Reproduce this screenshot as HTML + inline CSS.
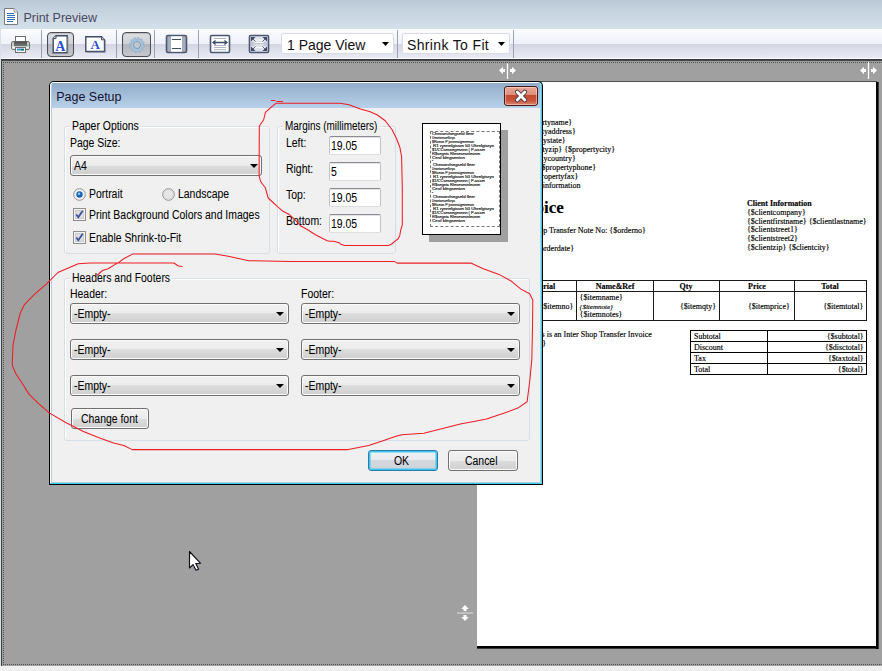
<!DOCTYPE html>
<html><head><meta charset="utf-8">
<style>
*{margin:0;padding:0;box-sizing:border-box}
html,body{width:882px;height:671px;overflow:hidden;background:#f0f0f0;font-family:"Liberation Sans",sans-serif;position:relative}
.a{position:absolute}
#title{left:0;top:0;width:882px;height:29px;background:linear-gradient(#bccad8,#d4e1eb)}
#title .t{left:23px;top:8px;font-size:12.5px;color:#4a4860;white-space:nowrap}
#tb{left:1px;top:29px;width:881px;height:30px;background:linear-gradient(#fbfcff 0,#f0f1f9 15px,#d3d6e2 15px,#e9eaf5 29px,#fff 29px)}
.sep{width:1px;height:28px;top:30px;background:#9aa2b0}
.btnp{border:1px solid #4c4e54;border-radius:4px;background:linear-gradient(#dedfe3 0,#cfd0d5 11px,#b4b6bd 11px,#c6c8ce 100%);box-shadow:inset 0 1px 1px rgba(0,0,0,.15)}
.dd{background:#fff;border:1px solid #d9dce4;border-radius:2px;font-size:14px;color:#111;white-space:nowrap}
.dd .arr{position:absolute;width:0;height:0;border-left:3.5px solid transparent;border-right:3.5px solid transparent;border-top:4px solid #000}
#gray{left:1px;top:59px;width:881px;height:607px;background:#a0a0a0;border-top:1px solid #343c4c;}
#gray2{left:1px;top:60px;width:881px;height:606px;border-top:1px solid #454545;border-left:1px solid #3d3d3d}
.dotx{height:1px;background:repeating-linear-gradient(90deg,#505050 0 1px,transparent 1px 2px)}
.doty{width:1px;background:repeating-linear-gradient(180deg,#505050 0 1px,transparent 1px 2px)}
#bot{left:0;top:666px;width:882px;height:5px;background:#f0f0f0}
#page{left:477px;top:82px;width:399px;height:564px;background:#fff}
.serif{font-family:"Liberation Serif",serif;color:#000;white-space:nowrap;-webkit-text-stroke:0.15px #000}
#dlg{left:49px;top:81px;width:494px;height:404px;border:1px solid #1a1a1a;border-radius:6px 6px 0 0;background:#f0f0f0;overflow:hidden}
.lbl{font-size:12px;color:#000;white-space:nowrap;letter-spacing:0;transform:scaleX(0.87);transform-origin:0 0;-webkit-text-stroke:0.05px #000}
.grp{border:1px solid #d5dfe5;border-radius:3px;box-shadow:inset 1px 1px 0 #fff}
.leg{background:#f0f0f0;padding:0 2px}
.combo{height:21px;border:1px solid #707070;border-radius:3px;background:linear-gradient(#f2f2f2 0,#ebebeb 50%,#dddddd 50%,#cfcfcf 100%);box-shadow:inset 0 0 0 1px #fbfbfb}
.combo .arr{position:absolute;width:0;height:0;border-left:4px solid transparent;border-right:4px solid transparent;border-top:4px solid #000;top:8px}
.combo .lbl{position:absolute;left:3px;top:3px}
.tbox{width:52px;height:19px;background:#fff;border:1px solid #c2c4ca;border-top-color:#8a8c92;border-bottom-color:#dcdee2;border-radius:2px;box-shadow:inset 0 1px 0 #e4e4e6}
.tbox .lbl{position:absolute;left:2px;top:3px;font-size:12px}
.btn{border:1px solid #707070;border-radius:3px;background:linear-gradient(#f2f2f2 0,#ebebeb 50%,#dddddd 50%,#cfcfcf 100%);box-shadow:inset 0 0 0 1px #fbfbfb;text-align:center}
</style></head><body>
<!-- title bar -->
<div id="title" class="a">
  <svg class="a" style="left:4px;top:8px" width="14" height="17" viewBox="0 0 14 17">
    <path d="M0.5 0.5H10L13.5 4V16.5H0.5Z" fill="#fff" stroke="#7a7a7a"/>
    <path d="M10 0.5V4H13.5" fill="#e8e8e8" stroke="#9a9a9a"/>
    <g stroke="#2f6fc0" stroke-width="1"><path d="M3 5.5H10M3 7.5H11M3 9.5H11M3 11.5H11M3 13.5H9"/></g>
  </svg>
  <div class="a t" style="top:11.9px;left:23.4px;line-height:12.5px">Print Preview</div>
</div>
<!-- toolbar -->
<div id="tb" class="a"></div>
<!-- toolbar items -->
<svg class="a" style="left:10px;top:35px" width="21" height="19" viewBox="0 0 21 19">
 <defs><linearGradient id="pg" x1="0" y1="0" x2="0" y2="1"><stop offset="0" stop-color="#4e4e4e"/><stop offset="1" stop-color="#7a7a7a"/></linearGradient></defs>
 <rect x="5.5" y="1.5" width="10" height="6" fill="#fff" stroke="#6e6e6e"/>
 <rect x="1.5" y="6.5" width="18" height="8" rx="1.5" fill="#c8c8c8" stroke="#707070"/>
 <rect x="4" y="6.5" width="13" height="5" fill="url(#pg)"/>
 <rect x="2" y="11.5" width="17" height="2" fill="#f4f4f4"/>
 <rect x="5.5" y="12.5" width="10" height="5" fill="#fff" stroke="#6e6e6e"/>
 <rect x="7" y="13.5" width="7" height="2" fill="#3a8ee0"/>
 <rect x="11" y="14" width="3" height="1.5" fill="#208040"/>
 <rect x="17" y="10" width="1.5" height="1.5" fill="#50e050"/>
</svg>
<div class="a sep" style="left:41px"></div>
<div class="a btnp" style="left:47px;top:32px;width:27px;height:25px"></div>
<svg class="a" style="left:52px;top:35px" width="17" height="19" viewBox="0 0 17 19">
 <path d="M4 0.8H15.2V17.7H1.2V3.6Z" fill="#fff" stroke="#3e4a66" stroke-width="1.4"/>
 <path d="M1.2 3.6H4V0.8" fill="#e4e4e4" stroke="#3e4a66" stroke-width="1"/>
 <path d="M15.9 2V18.4H2.5" fill="none" stroke="#8a8e98" stroke-width="0.8"/>
 <text x="8.4" y="15.6" font-family="Liberation Serif" font-weight="bold" font-size="14" fill="#2a52d0" text-anchor="middle">A</text>
</svg>
<svg class="a" style="left:85px;top:36px" width="22" height="17" viewBox="0 0 22 17">
 <path d="M0.8 0.8H16.5L19.5 3.8V15.5H0.8Z" fill="#fff" stroke="#3e4a66" stroke-width="1.4"/>
 <path d="M16.5 0.8V3.8H19.5" fill="#e4e4e4" stroke="#3e4a66" stroke-width="1"/>
 <path d="M20.3 4V16.3H2" fill="none" stroke="#8a8e98" stroke-width="0.8"/>
 <text x="10.2" y="13" font-family="Liberation Serif" font-weight="bold" font-size="13" fill="#2a52d0" text-anchor="middle">A</text>
</svg>
<div class="a sep" style="left:116px"></div>
<div class="a btnp" style="left:122px;top:32px;width:29px;height:25px"></div>
<svg class="a" style="left:128px;top:35.6px" width="18" height="18" viewBox="0 0 18 18">
 <path d="M15.00,9.00 L16.57,9.72 L16.34,10.97 L14.62,11.09 L14.20,12.00 L15.19,13.40 L14.37,14.37 L12.82,13.62 L12.00,14.20 L12.16,15.91 L10.97,16.34 L10.00,14.92 L9.00,15.00 L8.28,16.57 L7.03,16.34 L6.91,14.62 L6.00,14.20 L4.60,15.19 L3.63,14.37 L4.38,12.82 L3.80,12.00 L2.09,12.16 L1.66,10.97 L3.08,10.00 L3.00,9.00 L1.43,8.28 L1.66,7.03 L3.38,6.91 L3.80,6.00 L2.81,4.60 L3.63,3.63 L5.18,4.38 L6.00,3.80 L5.84,2.09 L7.03,1.66 L8.00,3.08 L9.00,3.00 L9.72,1.43 L10.97,1.66 L11.09,3.38 L12.00,3.80 L13.40,2.81 L14.37,3.63 L13.62,5.18 L14.20,6.00 L15.91,5.84 L16.34,7.03 L14.92,8.00Z" fill="#a9c5dc" stroke="#8aaac6" stroke-width="0.7"/>
 <circle cx="9" cy="9" r="3.6" fill="#c4c6cc" stroke="#7c9ebc" stroke-width="1"/>
</svg>
<div class="a sep" style="left:154px"></div>
<svg class="a" style="left:165px;top:34px" width="23" height="20" viewBox="0 0 23 20">
 <rect x="1.5" y="1.5" width="20" height="17" rx="1.5" fill="#a9aebb" stroke="#4a5672" stroke-width="1.6"/>
 <rect x="6" y="2.3" width="11" height="15.4" fill="#fff"/>
 <path d="M7 5.5H16M7 14.5H16" stroke="#3e4a66" stroke-width="1.2"/>
</svg>
<div class="a sep" style="left:198px"></div>
<svg class="a" style="left:209px;top:34px" width="22" height="20" viewBox="0 0 22 20">
 <rect x="1.5" y="1.5" width="19" height="17" rx="1.2" fill="#fff" stroke="#4a5672" stroke-width="1.6"/>
 <path d="M5 4.5H17M5 11.5H17M5 13.5H17M5 15.7H17" stroke="#a4aab6" stroke-width="0.9"/>
 <path d="M4.5 8.5H17.5" stroke="#3e4a66" stroke-width="1.5"/>
 <path d="M3 8.5L6.5 5.8V11.2Z M19 8.5L15.5 5.8V11.2Z" fill="#3e4a66"/>
</svg>
<svg class="a" style="left:248px;top:34px" width="22" height="20" viewBox="0 0 22 20">
 <rect x="1.5" y="1.5" width="19" height="17" rx="1.2" fill="#dfe2ea" stroke="#4a5672" stroke-width="1.6"/>
 <rect x="3" y="8" width="16" height="4" fill="#c2c8d4"/>
 <path d="M6.5 6H15.5M6.5 8.5H15.5M6.5 11H15.5M6.5 13.5H15.5" stroke="#fbfbfd" stroke-width="1"/>
 <path d="M4 4L7.5 7.5M18 4L14.5 7.5M4 16L7.5 12.5M18 16L14.5 12.5" stroke="#5a6680" stroke-width="1"/>
 <path d="M3 3H7.5L3 7.5Z M19 3H14.5L19 7.5Z M3 17H7.5L3 12.5Z M19 17H14.5L19 12.5Z" fill="#3e4a66"/>
</svg>
<div class="a dd" style="left:281px;top:33px;width:113px;height:21px"></div><svg class="a" style="left:381px;top:41px" width="9" height="6"><path d="M1 1H8L4.5 5Z" fill="#000"/></svg>
<div class="a" style="left:287px;top:37.5px;font-size:14px;line-height:14px;color:#111;white-space:nowrap">1 Page View</div>
<div class="a sep" style="left:397px"></div>
<div class="a dd" style="left:402px;top:33px;width:108px;height:21px"></div><svg class="a" style="left:497px;top:41px" width="9" height="6"><path d="M1 1H8L4.5 5Z" fill="#000"/></svg>
<div class="a" style="left:407px;top:37.5px;font-size:14px;line-height:14px;color:#111;white-space:nowrap;letter-spacing:0.35px">Shrink To Fit</div>
<div class="a sep" style="left:513px"></div>
<div id="gray" class="a"></div>
<div id="gray2" class="a"></div>
<div class="a dotx" style="left:3px;top:62px;width:879px"></div>
<div class="a doty" style="left:3px;top:62px;height:603px"></div>
<div class="a dotx" style="left:3px;top:664px;width:879px"></div>
<div id="bot" class="a"></div>
<div class="a" style="left:0;top:29px;width:1px;height:637px;background:#d8e0ea"></div>
<!-- page -->
<div id="page" class="a"></div>
<div class="a" style="left:477px;top:81px;width:400px;height:1px;background:#505050"></div>
<div class="a" style="left:477px;top:646px;width:402px;height:3px;background:#000;border-bottom:1px solid #3a3a3a;border-right:1px solid #3a3a3a"></div>
<div class="a" style="left:876px;top:82px;width:3px;height:567px;background:#000;border-right:1px solid #3a3a3a"></div>
<!-- cursor -->
<svg class="a" style="left:187px;top:549px" width="16" height="24" viewBox="0 0 16 24"><path d="M2.5,2.5 L2.5,19 L6,15.6 L9,21.3 L11.6,20.2 L8.8,14.6 L13.6,14.3 Z" fill="#fff" stroke="#0d0d1a" stroke-width="1.1" stroke-linejoin="round"/></svg>
<!-- page content -->
<div class="a serif" style="top:118.6px;font-size:8px;line-height:8px;right:309.8px;">{$propertyname}</div>
<div class="a serif" style="top:127.6px;font-size:8px;line-height:8px;right:306.2px;">{$propertyaddress}</div>
<div class="a serif" style="top:136.6px;font-size:8px;line-height:8px;right:316.4px;">{$propertystate}</div>
<div class="a serif" style="top:145.6px;font-size:8px;line-height:8px;right:267.0px;">{$propertyzip} {$propertycity}</div>
<div class="a serif" style="top:154.8px;font-size:8px;line-height:8px;right:306.2px;">{$propertycountry}</div>
<div class="a serif" style="top:163.7px;font-size:8px;line-height:8px;right:286.0px;">{$propertyphone}</div>
<div class="a serif" style="top:172.7px;font-size:8px;line-height:8px;right:303.6px;">{$propertyfax}</div>
<div class="a serif" style="top:181.5px;font-size:8px;line-height:8px;right:301.5px;">Property information</div>
<div class="a serif" style="top:199.3px;font-size:17px;line-height:17px;right:318.2px;font-weight:bold">Invoice</div>
<div class="a serif" style="top:226.6px;font-size:8px;line-height:8px;right:236.1px;">Inter Shop Transfer Note No: {$orderno}</div>
<div class="a serif" style="top:244.6px;font-size:8px;line-height:8px;right:308.0px;">{$orderdate}</div>
<div class="a serif" style="top:272.1px;font-size:8px;line-height:8px;right:338.5px;">}</div>
<div class="a serif" style="top:199.7px;font-size:8px;line-height:8px;left:747.0px;font-weight:bold">Client Information</div>
<div class="a serif" style="top:208.7px;font-size:8px;line-height:8px;left:747.0px;">{$clientcompany}</div>
<div class="a serif" style="top:217.5px;font-size:8px;line-height:8px;left:747.0px;">{$clientfirstname} {$clientlastname}</div>
<div class="a serif" style="top:226.3px;font-size:8px;line-height:8px;left:747.0px;">{$clientstreet1}</div>
<div class="a serif" style="top:235.1px;font-size:8px;line-height:8px;left:747.0px;">{$clientstreet2}</div>
<div class="a serif" style="top:243.9px;font-size:8px;line-height:8px;left:747.0px;">{$clientzip} {$clientcity}</div>
<div class="a" style="left:470px;top:280px;width:397px;height:41px;border:1px solid #1a1a1a"></div>
<div class="a" style="left:470px;top:291px;width:397px;height:1px;background:#1a1a1a"></div>
<div class="a" style="left:576px;top:280px;width:1px;height:41px;background:#1a1a1a"></div>
<div class="a" style="left:653px;top:280px;width:1px;height:41px;background:#1a1a1a"></div>
<div class="a" style="left:719px;top:280px;width:1px;height:41px;background:#1a1a1a"></div>
<div class="a" style="left:794px;top:280px;width:1px;height:41px;background:#1a1a1a"></div>
<div class="a serif" style="top:282.6px;font-size:8px;line-height:8px;right:326.8px;font-weight:bold">Serial</div>
<div class="a serif" style="top:282.6px;font-size:8px;line-height:8px;left:515.0px;width:200px;text-align:center;font-weight:bold">Name&amp;Ref</div>
<div class="a serif" style="top:282.6px;font-size:8px;line-height:8px;left:586.0px;width:200px;text-align:center;font-weight:bold">Qty</div>
<div class="a serif" style="top:282.6px;font-size:8px;line-height:8px;left:657.0px;width:200px;text-align:center;font-weight:bold">Price</div>
<div class="a serif" style="top:282.6px;font-size:8px;line-height:8px;left:730.0px;width:200px;text-align:center;font-weight:bold">Total</div>
<div class="a serif" style="top:302.6px;font-size:8px;line-height:8px;right:308.7px;">{$itemno}</div>
<div class="a serif" style="top:293.7px;font-size:8px;line-height:8px;left:579.6px;">{$itemname}</div>
<div class="a serif" style="top:303.5px;font-size:7px;line-height:7px;left:579.6px;font-style:italic">{$itemnote}</div>
<div class="a serif" style="top:311.1px;font-size:8px;line-height:8px;left:579.6px;">{$itemnotes}</div>
<div class="a serif" style="top:302.6px;font-size:8px;line-height:8px;right:166.0px;">{$itemqty}</div>
<div class="a serif" style="top:302.6px;font-size:8px;line-height:8px;right:92.2px;">{$itemprice}</div>
<div class="a serif" style="top:302.6px;font-size:8px;line-height:8px;right:18.7px;">{$itemtotal}</div>
<div class="a serif" style="top:331.4px;font-size:8px;line-height:8px;right:230.2px;">This is an Inter Shop Transfer Invoice</div>
<div class="a serif" style="top:339.6px;font-size:8px;line-height:8px;right:336.0px;">{$notes}</div>
<div class="a" style="left:690px;top:330px;width:177px;height:45px;border:1px solid #000"></div>
<div class="a" style="left:690px;top:341px;width:177px;height:1px;background:#000"></div>
<div class="a" style="left:690px;top:352px;width:177px;height:1px;background:#000"></div>
<div class="a" style="left:690px;top:363px;width:177px;height:1px;background:#000"></div>
<div class="a" style="left:767px;top:330px;width:1px;height:45px;background:#000"></div>
<div class="a serif" style="top:332.6px;font-size:8px;line-height:8px;left:694.0px;">Subtotal</div>
<div class="a serif" style="top:332.6px;font-size:8px;line-height:8px;right:18.3px;">{$subtotal}</div>
<div class="a serif" style="top:343.6px;font-size:8px;line-height:8px;left:694.0px;">Discount</div>
<div class="a serif" style="top:343.6px;font-size:8px;line-height:8px;right:18.3px;">{$disctotal}</div>
<div class="a serif" style="top:354.6px;font-size:8px;line-height:8px;left:694.0px;">Tax</div>
<div class="a serif" style="top:354.6px;font-size:8px;line-height:8px;right:18.3px;">{$taxtotal}</div>
<div class="a serif" style="top:365.6px;font-size:8px;line-height:8px;left:694.0px;">Total</div>
<div class="a serif" style="top:365.6px;font-size:8px;line-height:8px;right:18.3px;">{$total}</div>
<svg class="a" style="left:497px;top:62px" width="22" height="18" viewBox="0 0 22 18"><path d="M10.5 1.5V17" stroke="#fff" stroke-width="1.3"/><path d="M2 8.5L6 4.8V7H8V10H6V12.2Z M19 8.5L15 4.8V7H13V10H15V12.2Z" fill="#fff"/></svg>
<svg class="a" style="left:858px;top:61px" width="22" height="18" viewBox="0 0 22 18"><path d="M10.5 1V18" stroke="#fff" stroke-width="1.3"/><path d="M2 9.5L6 5.8V8H8V11H6V13.2Z M19 9.5L15 5.8V8H13V11H15V13.2Z" fill="#fff"/></svg>
<svg class="a" style="left:455px;top:603px" width="20" height="20" viewBox="0 0 20 20"><path d="M2 10H18" stroke="#d4d4d4" stroke-width="1.3"/><path d="M10 2L13.8 6H11.5V8H8.5V6H6.2Z M10 18L13.8 14H11.5V12H8.5V14H6.2Z" fill="#fff"/></svg>
<!-- dialog -->
<div class="a" style="left:49px;top:81px;width:494px;height:404px;background:#000;border-radius:5px 5px 0 0"></div>
<div class="a" style="left:50px;top:82px;width:492px;height:402px;background:#35d0f0;border-radius:4px 4px 0 0"></div>
<div class="a" style="left:50px;top:82px;width:491px;height:401px;background:#b4cce4;border-radius:4px 4px 0 0;border-top:1px solid #fff;border-left:1px solid #fff"></div>
<div class="a" style="left:52px;top:83px;width:488px;height:25px;background:linear-gradient(#91adca,#b9d1ea)"></div>
<div class="a" style="left:52px;top:108px;width:488px;height:374px;background:#f0f0f0"></div>
<div class="a lbl" style="left:56.2px;top:91.3px;font-size:12.5px;line-height:12.5px;color:#101030;letter-spacing:0;transform:none;-webkit-text-stroke:0">Page Setup</div>
<div class="a" style="left:504px;top:86px;width:34px;height:20px;border:1px solid #4a1818;border-radius:3px;background:linear-gradient(#eaa898 0,#dd8e7a 8px,#c2462c 8px,#c8583e 14px,#df8a72 100%);box-shadow:inset 0 0 0 1px rgba(255,230,220,.5)"></div>
<svg class="a" style="left:513px;top:88px" width="16" height="16" viewBox="0 0 16 16"><path d="M4.2 4L11.8 12M11.8 4L4.2 12" stroke="#3b3b4b" stroke-width="4.6" stroke-linecap="round"/><path d="M4.2 4L11.8 12M11.8 4L4.2 12" stroke="#fff" stroke-width="2.8" stroke-linecap="round"/></svg>
<div class="a grp" style="left:64px;top:126px;width:206px;height:128px"></div>
<div class="a leg" style="left:70px;top:120px;width:70px;height:10px"></div>
<div class="a lbl" style="left:72.4px;top:120px;font-size:12px;line-height:12px;">Paper Options</div>
<div class="a lbl" style="left:69.6px;top:137px;font-size:12px;line-height:12px;">Page Size:</div>
<div class="a combo" style="left:70px;top:155px;width:192px;height:21px"><div class="arr" style="left:179px"></div></div>
<div class="a lbl" style="left:74.0px;top:160px;font-size:12px;line-height:12px;">A4</div>
<svg class="a" style="left:73px;top:188px" width="13" height="13" viewBox="0 0 13 13"><circle cx="6.5" cy="6.5" r="5.8" fill="#f4f4f4" stroke="#8e8f8f" stroke-width="1"/><circle cx="6.5" cy="6.5" r="3.2" fill="#1a64b4"/><circle cx="6" cy="5.7" r="1.3" fill="#8cc8f8"/></svg>
<svg class="a" style="left:162px;top:188px" width="13" height="13" viewBox="0 0 13 13"><circle cx="6.5" cy="6.5" r="5.8" fill="#ececec" stroke="#8e8f8f" stroke-width="1"/><circle cx="6.5" cy="6.5" r="4.5" fill="#e6e6e6" stroke="#d0d0d0" stroke-width="0.6"/></svg>
<div class="a lbl" style="left:88.6px;top:188px;font-size:12px;line-height:12px;">Portrait</div>
<div class="a lbl" style="left:178.3px;top:188px;font-size:12px;line-height:12px;">Landscape</div>
<svg class="a" style="left:73px;top:208px" width="13" height="13" viewBox="0 0 13 13"><rect x="0.5" y="0.5" width="12" height="12" fill="#f4f4f4" stroke="#8e8f8f"/><rect x="2.5" y="2.5" width="8" height="8" fill="#dedede" stroke="#c4c4c4" stroke-width="0.8"/><path d="M3.3 6.6L5.3 9.3L9.7 2.8" fill="none" stroke="#3c4fa0" stroke-width="1.7"/></svg>
<svg class="a" style="left:73px;top:231px" width="13" height="13" viewBox="0 0 13 13"><rect x="0.5" y="0.5" width="12" height="12" fill="#f4f4f4" stroke="#8e8f8f"/><rect x="2.5" y="2.5" width="8" height="8" fill="#dedede" stroke="#c4c4c4" stroke-width="0.8"/><path d="M3.3 6.6L5.3 9.3L9.7 2.8" fill="none" stroke="#3c4fa0" stroke-width="1.7"/></svg>
<div class="a lbl" style="left:88.6px;top:209px;font-size:12px;line-height:12px;">Print Background Colors and Images</div>
<div class="a lbl" style="left:88.6px;top:232px;font-size:12px;line-height:12px;">Enable Shrink-to-Fit</div>
<div class="a grp" style="left:277px;top:126px;width:119px;height:128px"></div>
<div class="a leg" style="left:283px;top:120px;width:97px;height:10px"></div>
<div class="a lbl" style="left:284.5px;top:120px;font-size:12px;line-height:12px;transform:scaleX(0.83)">Margins (millimeters)</div>
<div class="a lbl" style="left:285.5px;top:137px;font-size:12px;line-height:12px;">Left:</div>
<div class="a tbox" style="left:329px;top:136px"></div>
<div class="a lbl" style="left:330.6px;top:140px;font-size:12px;line-height:12px;">19.05</div>
<div class="a lbl" style="left:285.5px;top:163px;font-size:12px;line-height:12px;">Right:</div>
<div class="a tbox" style="left:329px;top:162px"></div>
<div class="a lbl" style="left:330.6px;top:166px;font-size:12px;line-height:12px;">5</div>
<div class="a lbl" style="left:285.5px;top:189px;font-size:12px;line-height:12px;">Top:</div>
<div class="a tbox" style="left:329px;top:188px"></div>
<div class="a lbl" style="left:330.6px;top:192px;font-size:12px;line-height:12px;">19.05</div>
<div class="a lbl" style="left:285.5px;top:215px;font-size:12px;line-height:12px;">Bottom:</div>
<div class="a tbox" style="left:329px;top:214px"></div>
<div class="a lbl" style="left:330.6px;top:218px;font-size:12px;line-height:12px;">19.05</div>
<div class="a" style="left:429px;top:130px;width:79px;height:112px;background:#a0a0a0"></div>
<div class="a" style="left:422px;top:123px;width:79px;height:112px;background:#fff;border:1px solid #000"></div>
<div class="a" style="left:430px;top:131px;width:70px;height:96px;border:1px dashed #777"></div>
<div class="a grp" style="left:64px;top:278px;width:466px;height:163px"></div>
<div class="a leg" style="left:70px;top:272px;width:102px;height:10px"></div>
<div class="a lbl" style="left:72.4px;top:272px;font-size:12px;line-height:12px;">Headers and Footers</div>
<div class="a lbl" style="left:69.6px;top:288px;font-size:12px;line-height:12px;">Header:</div>
<div class="a lbl" style="left:300.9px;top:288px;font-size:12px;line-height:12px;">Footer:</div>
<div class="a combo" style="left:70px;top:303px;width:219px;height:21px"><div class="arr" style="left:205px"></div></div>
<div class="a lbl" style="left:73.8px;top:308px;font-size:12px;line-height:12px;">-Empty-</div>
<div class="a combo" style="left:301px;top:303px;width:219px;height:21px"><div class="arr" style="left:205px"></div></div>
<div class="a lbl" style="left:304.7px;top:308px;font-size:12px;line-height:12px;">-Empty-</div>
<div class="a combo" style="left:70px;top:339px;width:219px;height:21px"><div class="arr" style="left:205px"></div></div>
<div class="a lbl" style="left:73.8px;top:344px;font-size:12px;line-height:12px;">-Empty-</div>
<div class="a combo" style="left:301px;top:339px;width:219px;height:21px"><div class="arr" style="left:205px"></div></div>
<div class="a lbl" style="left:304.7px;top:344px;font-size:12px;line-height:12px;">-Empty-</div>
<div class="a combo" style="left:70px;top:375px;width:219px;height:21px"><div class="arr" style="left:205px"></div></div>
<div class="a lbl" style="left:73.8px;top:380px;font-size:12px;line-height:12px;">-Empty-</div>
<div class="a combo" style="left:301px;top:375px;width:219px;height:21px"><div class="arr" style="left:205px"></div></div>
<div class="a lbl" style="left:304.7px;top:380px;font-size:12px;line-height:12px;">-Empty-</div>
<div class="a btn" style="left:71px;top:408px;width:78px;height:21px"></div>
<div class="a lbl" style="left:80.9px;top:413px;font-size:12px;line-height:12px;">Change font</div>
<div class="a btn" style="left:368px;top:450px;width:70px;height:21px;border-color:#2f78ae;background:linear-gradient(#f0f2f4 0,#e8eaee 45%,#d4d9df 50%,#cdd3d9 100%);box-shadow:inset 0 0 0 1.5px #3cc6f0"></div>
<div class="a lbl" style="left:394.3px;top:455px;font-size:12px;line-height:12px;">OK</div>
<div class="a btn" style="left:448px;top:450px;width:70px;height:21px"></div>
<div class="a lbl" style="left:465.0px;top:455px;font-size:12px;line-height:12px;">Cancel</div>
<!-- thumb -->
<svg class="a" style="left:0;top:0" width="882" height="671" viewBox="0 0 882 671" font-family="Liberation Sans" font-size="3.7" fill="#111" stroke="#222" stroke-width="0.15"><text x="432" y="134.8" textLength="42" lengthAdjust="spacingAndGlyphs">Chessecfsegsefd fleer</text><text x="432" y="138.8" textLength="23" lengthAdjust="spacingAndGlyphs">Uesetsessefforys</text><text x="432" y="142.7" textLength="42" lengthAdjust="spacingAndGlyphs">$Rsesn P jonnnsigeneeun</text><text x="433" y="146.6" textLength="61" lengthAdjust="spacingAndGlyphs">R1 rynnelgissm 50 Uhrelgisryn</text><text x="432" y="150.6" textLength="53" lengthAdjust="spacingAndGlyphs">$1/CCsesnegesnnn ( P-usser</text><text x="432" y="154.5" textLength="48" lengthAdjust="spacingAndGlyphs">R$segnis Rfesesesnleunm</text><text x="432" y="158.5" textLength="33" lengthAdjust="spacingAndGlyphs">Cesf blegsenion</text><text x="432" y="162.4">•</text><text x="433" y="166.4" textLength="42" lengthAdjust="spacingAndGlyphs">Chessecfsegsefd fleer</text><text x="432" y="170.3" textLength="23" lengthAdjust="spacingAndGlyphs">Uesetsessefforys</text><text x="432" y="174.3" textLength="42" lengthAdjust="spacingAndGlyphs">$Rsesn P jonnnsigeneeun</text><text x="433" y="178.2" textLength="61" lengthAdjust="spacingAndGlyphs">R1 rynnelgissm 50 Uhrelgisryn</text><text x="432" y="182.2" textLength="53" lengthAdjust="spacingAndGlyphs">$1/CCsesnegesnnn ( P-usser</text><text x="432" y="186.1" textLength="48" lengthAdjust="spacingAndGlyphs">R$segnis Rfesesesnleunm</text><text x="432" y="190.1" textLength="33" lengthAdjust="spacingAndGlyphs">Cesf blegsenion</text><text x="432" y="194.0">•</text><text x="433" y="198.0" textLength="42" lengthAdjust="spacingAndGlyphs">Chessecfsegsefd fleer</text><text x="432" y="201.9" textLength="23" lengthAdjust="spacingAndGlyphs">Uesetsessefforys</text><text x="432" y="205.9" textLength="42" lengthAdjust="spacingAndGlyphs">$Rsesn P jonnnsigeneeun</text><text x="433" y="209.8" textLength="61" lengthAdjust="spacingAndGlyphs">R1 rynnelgissm 50 Uhrelgisryn</text><text x="432" y="213.8" textLength="53" lengthAdjust="spacingAndGlyphs">$1/CCsesnegesnnn ( P-usser</text><text x="432" y="217.7" textLength="48" lengthAdjust="spacingAndGlyphs">R$segnis Rfesesesnleunm</text><text x="432" y="221.7" textLength="33" lengthAdjust="spacingAndGlyphs">Cesf blegsenion</text></svg>
<!-- red -->
<svg class="a" style="left:0;top:0" width="882" height="671" viewBox="0 0 882 671" fill="none" stroke="#ee1c24" stroke-width="1.05" stroke-linejoin="round">
<path d="M271,100.5H275.5 M276.5,101.5H283"/>
<path d="M275.8,103.3 H340 L349,104.8 L360.4,108.9 L369.5,111.6 L377.4,115 L385.3,120.7 L392.1,129.7 L396.6,138.8 L400,147.8 L401.6,156.9 L402.3,188.6 L402.3,224.9 L400.7,230 L399.8,235.4 L398,239 L395.3,240.9 L391.7,244 L388.5,245.4 L344.5,245.4 L340.9,244.3 L339,242.7 L333.6,241.3 L330,241.3 L327.2,240.7 L315.4,234.8 L306.5,229 L300.6,226 L294.7,219.4 L288.8,214.2 L283,211.3 L277.8,206.8 L268.2,198 L265.3,187.7 L260.8,181.8 L259.1,175.9 L259.3,126.3 L260,125 L263.6,120 L265.4,112.4 L269,109.2 L275.8,103.3"/>
<path d="M96.8,275.5 L102.5,270.5 L108.1,268.7 L114.9,264.6 L119.5,261.9 L124,258.5 L133.1,253.9 L214.7,253.9 L228.3,256.2 L248.7,260.7 L290,261.4 L394.4,261.4 L397.2,263.1 L470.8,263.1 L483.3,268.8 L499,274.4 L511.5,281.3 L520.9,289.1 L529.7,293.8 L532.8,300.1 L532.5,328.3 L531.8,359.6 L529.7,381.5 L527.1,401.8 L517.8,408.1 L505.2,412.8 L486.5,419.1 L473.9,421.6 L461.4,423.8 L442.6,428.5 L423.8,433.2 L401.9,434.7 L396,436.3 L382.3,441.1 L368.7,445.5 L348.3,449.6 L132.3,449.6 L123.8,445.5 L113.6,443.1 L110,441.8 L98.4,437.5 L84,431.7 L66.6,423 L49.2,412.9 L37.6,402.7 L28.9,394.1 L21.7,382.5 L15.9,373.8 L12.2,365.1 L13,344.8 L15.9,330.4 L20.3,313 L24.6,304.3 L34.7,294.2 L46.3,284.1 L57.9,272.5 L78.2,263.8 L90,263 L173.9,263 L178.4,266 L182.5,266.4"/>
</svg>
</body></html>
